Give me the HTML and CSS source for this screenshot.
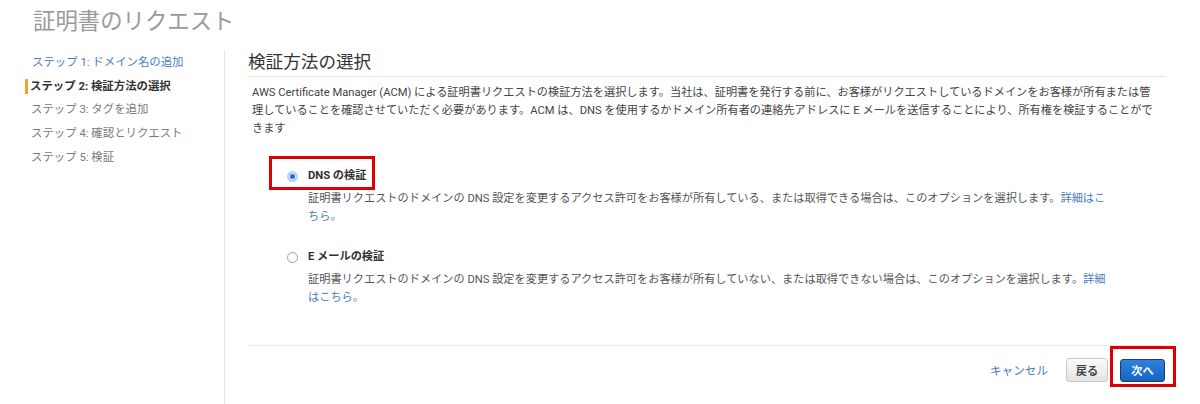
FILE: index.html
```html
<!DOCTYPE html>
<html lang="ja">
<head>
<meta charset="utf-8">
<title>証明書のリクエスト</title>
<link rel="stylesheet" href="styles.css">
</head>
<body>
<div class="page">
  <h1 class="title">証明書のリクエスト</h1>
  <div class="layout">
    <nav class="steps">
      <ul class="step-list">
        <li class="step step-done"><a href="#">ステップ 1: ドメイン名の追加</a></li>
        <li class="step step-current">ステップ 2: 検証方法の選択</li>
        <li class="step">ステップ 3: タグを追加</li>
        <li class="step">ステップ 4: 確認とリクエスト</li>
        <li class="step">ステップ 5: 検証</li>
      </ul>
    </nav>
    <main class="content">
      <h2 class="heading">検証方法の選択</h2>
      <p class="intro">AWS Certificate Manager (ACM) による証明書リクエストの検証方法を選択します。当社は、証明書を発行する前に、お客様がリクエストしているドメインをお客様が所有または管理していることを確認させていただく必要があります。ACM は、DNS を使用するかドメイン所有者の連絡先アドレスに E メールを送信することにより、所有権を検証することができます</p>

      <div class="options">
        <div class="option option-dns">
          <span class="radio radio-checked"></span>
          <span class="option-label">DNS の検証</span>
          <span class="highlight highlight-dns"></span>
          <p class="option-desc">証明書リクエストのドメインの DNS 設定を変更するアクセス許可をお客様が所有している、または取得できる場合は、このオプションを選択します。<a href="#">詳細はこちら。</a></p>
        </div>
        <div class="option option-email">
          <span class="radio"></span>
          <span class="option-label">E メールの検証</span>
          <p class="option-desc">証明書リクエストのドメインの DNS 設定を変更するアクセス許可をお客様が所有していない、または取得できない場合は、このオプションを選択します。<a href="#">詳細はこちら。</a></p>
        </div>
      </div>

      <div class="footer">
        <a href="#" class="cancel">キャンセル</a>
        <button class="btn btn-back" type="button">戻る</button>
        <span class="next-wrap">
          <button class="btn btn-next" type="button">次へ</button>
          <span class="highlight highlight-next"></span>
        </span>
      </div>
    </main>
  </div>
</div>
</body>
</html>
```

FILE: styles.css
```css
* { box-sizing: border-box; }

html, body {
  margin: 0;
  padding: 0;
  background: #ffffff;
}

body {
  font-family: Roboto, "Noto Sans CJK JP", sans-serif;
  font-size: 11.2px;
  color: #444444;
}

.page {
  width: 1200px;
  height: 404px;
  overflow: hidden;
}

.title {
  margin: 0;
  padding: 6px 0 0 33px;
  height: 50px;
  font-size: 22.4px;
  line-height: 30px;
  font-weight: 400;
  color: #9a9a9a;
}

.layout {
  display: flex;
  height: 354px;
}

.steps {
  width: 225px;
  flex: none;
  border-right: 1px solid #e6e6e6;
  padding-top: 1px;
}

.step-list {
  list-style: none;
  margin: 0;
  padding: 0 0 0 25px;
}

.step {
  line-height: 23.8px;
  padding-left: 3px;
  border-left: 3px solid transparent;
  color: #7a7a7a;
  font-size: 11.4px;
}

.step-done a {
  color: #4a7cc4;
  text-decoration: none;
  padding-left: 1px;
}

.step-current {
  color: #333333;
  font-weight: 700;
  border-left-color: #f5a131;
  padding-left: 2px;
  line-height: 15px;
  margin: 4px 0 4.6px;
}

.content {
  flex: 1;
  padding: 0 35px 0 23px;
  display: flex;
  flex-direction: column;
}

.heading {
  margin: 0;
  font-size: 17.6px;
  line-height: 24px;
  font-weight: 400;
  color: #333333;
  padding-bottom: 2px;
  border-bottom: 1px solid #e4e4e4;
}

.intro {
  margin: 7px 0 0;
  padding-left: 4px;
  width: 908px;
  line-height: 18px;
  color: #444444;
}

.options {
  margin-top: 29px;
  padding-left: 39px;
  display: flex;
  flex-direction: column;
  gap: 22px;
}

.option {
  position: relative;
  display: grid;
  grid-template-columns: 11px 1fr;
  column-gap: 10px;
  row-gap: 5px;
  align-items: center;
}

.radio {
  width: 11px;
  height: 11px;
  border-radius: 50%;
  border: 1px solid #a0a0a0;
  background: #ffffff;
}

.radio-checked {
  border: 2px solid #b9d3f3;
  background: #1a6fe0;
  box-shadow: inset 0 0 0 1px #ffffff;
}

.option-label {
  font-weight: 700;
  line-height: 18px;
  color: #333333;
}

.option-desc {
  grid-column: 2;
  margin: 0;
  width: 806px;
  line-height: 18px;
  color: #555555;
}

.option-desc a,
.cancel {
  color: #4a7cc4;
  text-decoration: none;
}

.highlight {
  position: absolute;
  border: 3px solid #dd0000;
  pointer-events: none;
}

.highlight-dns {
  left: -18px;
  top: -11px;
  width: 106px;
  height: 34px;
}

.footer {
  margin-top: auto;
  margin-bottom: 22px;
  border-top: 1px solid #ebebeb;
  padding-top: 12px;
  display: flex;
  justify-content: flex-end;
  align-items: center;
}

.cancel {
  font-size: 11.6px;
  margin-right: 18px;
}

.btn {
  font-family: Roboto, "Noto Sans CJK JP", sans-serif;
  font-size: 11.2px;
  font-weight: 700;
  height: 24px;
  padding: 0;
  border-radius: 3px;
  cursor: pointer;
  white-space: nowrap;
}

.btn-back {
  width: 42px;
  color: #444444;
  background: linear-gradient(#fbfbfb, #e4e4e4);
  border: 1px solid #c8c8c8;
  margin-right: 12px;
}

.next-wrap {
  position: relative;
  display: flex;
}

.btn-next {
  width: 45px;
  height: 23px;
  color: #ffffff;
  background: linear-gradient(#2f80dc, #1566c2);
  border: 1px solid #1c3d66;
}

.highlight-next {
  left: -10px;
  top: -13px;
  right: -11px;
  bottom: -5px;
}
```
